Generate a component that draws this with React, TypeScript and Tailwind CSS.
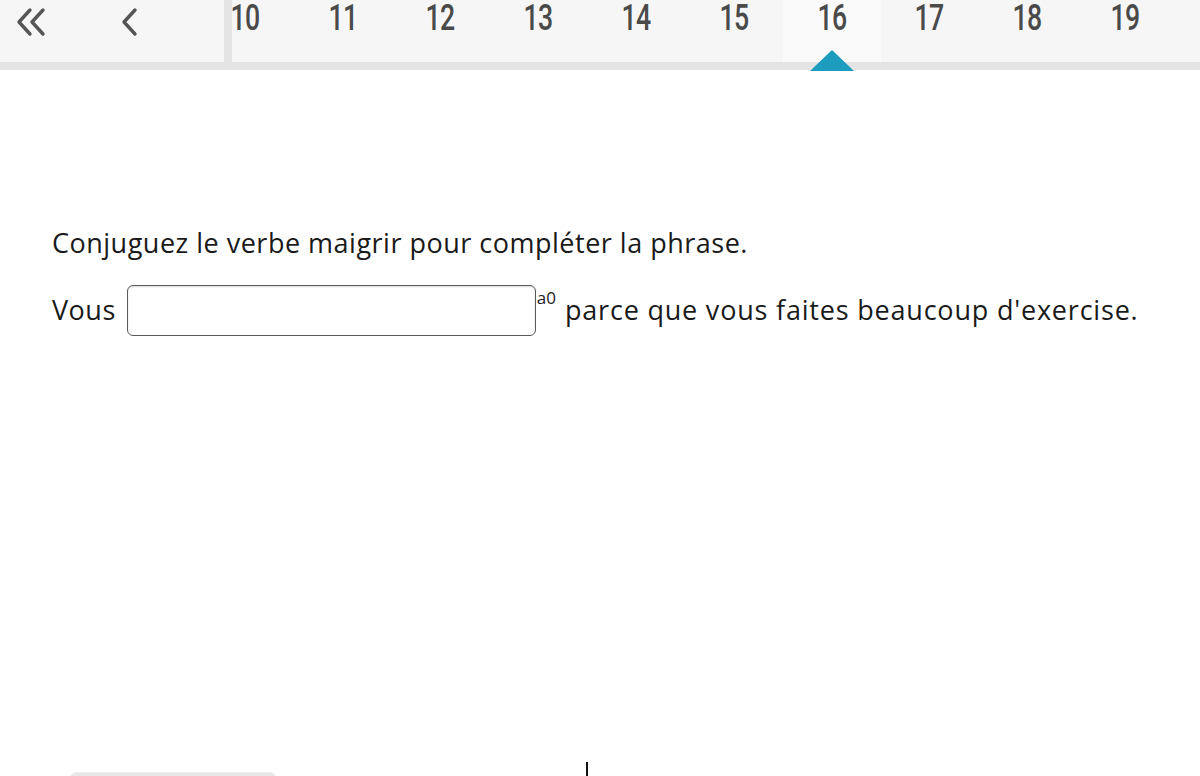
const pages = [10, 11, 12, 13, 14, 15, 16, 17, 18, 19, 20]

export default function App() {
    const current = 16

    return (
        <div className="relative h-[776px] w-[1200px] overflow-hidden bg-white font-['Open_Sans',sans-serif] text-[#1a1a1a]">
            {/* Question navigation */}
            <div className="flex h-[70px] flex-col">
                <div className="flex h-[62px] bg-[#f6f6f6]">
                    <div className="flex w-[224px] shrink-0 items-start">
                        <button className="flex h-[40px] w-[64px] items-center justify-center pt-1 text-[#555]">
                            <svg width="32" height="30" viewBox="0 0 32 30" fill="none" stroke="currentColor" strokeWidth="3.4" strokeLinecap="round" strokeLinejoin="round">
                                <path d="M14 3 L3 15 L14 27" />
                                <path d="M27 3 L16 15 L27 27" />
                            </svg>
                        </button>
                        <button className="ml-[50px] flex h-[40px] w-[30px] items-center justify-center pt-1 text-[#555]">
                            <svg width="20" height="30" viewBox="0 0 20 30" fill="none" stroke="currentColor" strokeWidth="3.4" strokeLinecap="round" strokeLinejoin="round">
                                <path d="M16 3 L5 15 L16 27" />
                            </svg>
                        </button>
                    </div>
                    <div className="relative z-10 h-[70px] w-[8px] shrink-0 bg-[#e4e4e4]" />
                    <div className="min-w-0 flex-1 overflow-x-clip">
                        <div className="-ml-[36px] flex">
                            {pages.map((p) => (
                                <div
                                    key={p}
                                    className={
                                        p === current
                                            ? 'relative flex h-[62px] w-[97.8px] shrink-0 justify-center bg-[#fafafa]'
                                            : 'relative flex h-[62px] w-[97.8px] shrink-0 justify-center'
                                    }
                                >
                                    <span className="mt-[-2px] inline-block scale-x-[0.72] font-['Roboto',sans-serif] text-[37px] leading-[40px] font-medium tracking-[-1px] text-[#4a4a4a]">
                                        {p}
                                    </span>
                                    {p === current && (
                                        <span className="absolute top-[50px] left-1/2 z-20 h-0 w-0 -translate-x-1/2 border-x-[22px] border-b-[21px] border-x-transparent border-b-[#1d9cc0]" />
                                    )}
                                </div>
                            ))}
                        </div>
                    </div>
                </div>
                <div className="h-[8px] bg-[#e4e4e4]" />
            </div>

            {/* Question */}
            <div className="px-[52px] pt-[154px] tracking-[0.5px]">
                <p className="text-[27px] leading-[38px]">Conjuguez le verbe maigrir pour compléter la phrase.</p>
                <div className="mt-[23px] flex items-center text-[27px]">
                    <span>Vous</span>
                    <input
                        type="text"
                        className="ml-[11px] h-[51px] w-[409px] rounded-[6px] border-[1.5px] border-[#5a5a5a] bg-white shadow-[inset_0_1px_2px_rgba(0,0,0,0.15)] outline-none"
                    />
                    <span className="mt-[3px] ml-[1px] self-start text-[17px] leading-[20px] tracking-normal">a0</span>
                    <span className="ml-[9px] tracking-[0.8px]">parce que vous faites beaucoup d'exercise.</span>
                </div>
            </div>

            {/* Partially visible footer */}
            <div className="absolute top-[762px] left-[586px] h-[14px] w-[2px] bg-[#111]" />
            <div className="absolute top-[772px] left-[70px] h-[10px] w-[206px] rounded-t-[6px] border border-[#eee] bg-[#e8e8e8]" />
        </div>
    )
}
